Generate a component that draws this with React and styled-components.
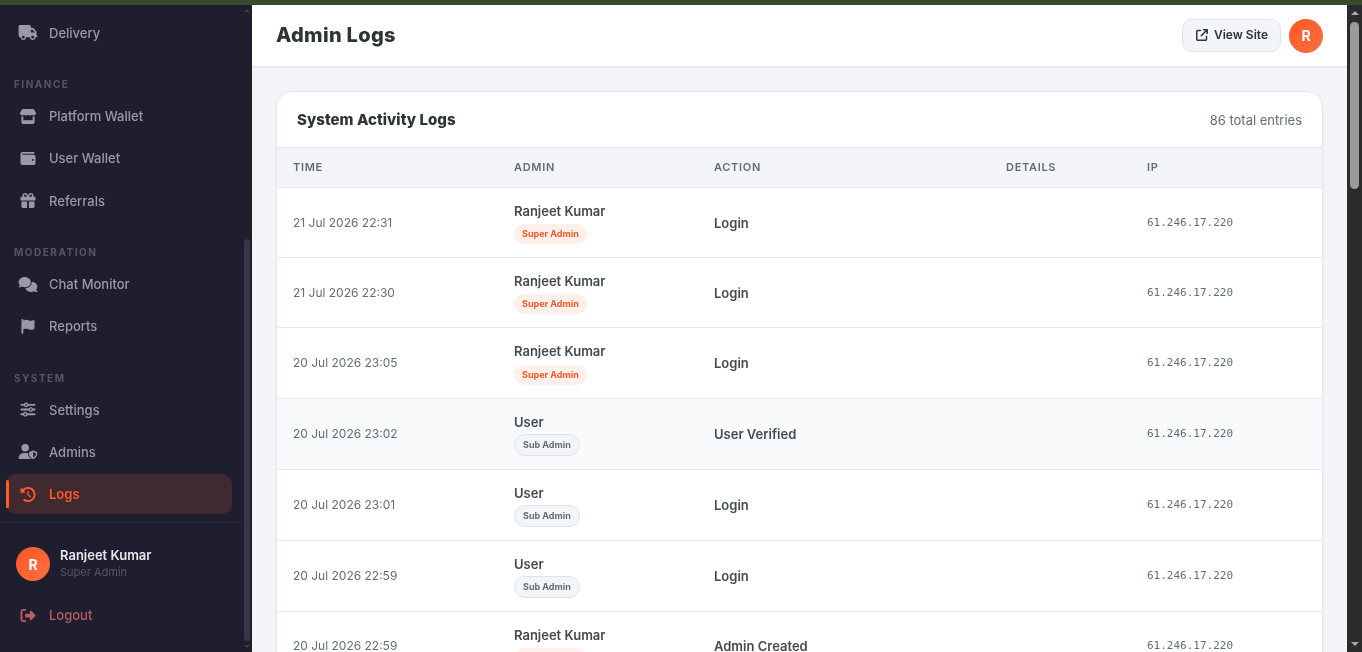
import React from 'react';
import styled, { createGlobalStyle } from 'styled-components';
import {
  FaTruck,
  FaStore,
  FaWallet,
  FaGift,
  FaComments,
  FaFlag,
  FaSliders,
  FaUserShield,
  FaClockRotateLeft,
  FaRightFromBracket,
  FaArrowUpRightFromSquare,
} from 'react-icons/fa6';

const GlobalStyle = createGlobalStyle`
  html, body {
    margin: 0;
    height: 100%;
    overflow: hidden;
  }
  body {
    font-family: 'Inter', 'Liberation Sans', sans-serif;
    background: #f4f5f9;
  }
  * {
    box-sizing: border-box;
  }
`;

const Shell = styled.div`
  display: flex;
  flex-direction: column;
  height: 100vh;
  will-change: transform;
`;

const TopStrip = styled.div`
  flex: none;
  height: 5px;
  background: #3a4a2e;
`;

const Body = styled.div`
  flex: 1;
  min-height: 0;
  display: flex;
`;

const Sidebar = styled.aside`
  flex: none;
  display: flex;
  width: 252px;
  background: #1e1e2e;
`;

const SidebarInner = styled.div`
  flex: 1;
  min-width: 0;
  padding-top: 7.9px;
  overflow: hidden;
`;

// scrollbars, drawn because the page itself does not scroll
const ScrollTrack = styled.div`
  flex: none;
  display: flex;
  flex-direction: column;
  align-items: center;
  width: ${(p) => p.$width}px;
  padding-right: ${(p) => p.$right || 0}px;
  background: ${(p) => p.$bg};
`;

const ScrollArrow = styled.div`
  flex: none;
  width: 0;
  height: 0;
  margin: ${(p) => p.$margin};
  border-left: ${(p) => p.$size}px solid transparent;
  border-right: ${(p) => p.$size}px solid transparent;
  border-bottom: ${(p) => (p.$down ? 'none' : `${p.$size}px solid ${p.$color}`)};
  border-top: ${(p) => (p.$down ? `${p.$size}px solid ${p.$color}` : 'none')};
`;

const ScrollSlot = styled.div`
  flex: 1;
  min-height: 0;
  padding-top: ${(p) => p.$offset}px;
`;

const ScrollThumb = styled.div`
  width: ${(p) => p.$width}px;
  height: ${(p) => p.$height}px;
  border-radius: ${(p) => p.$width / 2}px;
  background: ${(p) => p.$color};
`;

const Section = styled.div`
  margin-top: 25.4px;
`;

const SectionLabel = styled.div`
  height: 12px;
  margin-bottom: 6px;
  padding-left: 14px;
  font-size: 10px;
  line-height: 12px;
  font-weight: 700;
  letter-spacing: 1.5px;
  color: #565664;
`;

const NavItem = styled.div`
  position: relative;
  display: flex;
  align-items: center;
  gap: 11px;
  height: 40px;
  margin: 0 11px 2.2px 6px;
  padding-left: 12px;
  border-radius: 10px;
  font-size: 13px;
  font-weight: ${(p) => (p.$active ? 600 : 500)};
  color: ${(p) => (p.$active ? '#ff5b2b' : '#9a9aa6')};
  background: ${(p) => (p.$active ? '#40292f' : 'transparent')};

  &::before {
    content: '';
    display: ${(p) => (p.$active ? 'block' : 'none')};
    position: absolute;
    left: 0;
    top: 6px;
    bottom: 6px;
    width: 3px;
    border-radius: 2px;
    background: #ff5b2b;
  }
`;

const NavIcon = styled.span`
  flex: none;
  display: flex;
  align-items: center;
  justify-content: center;
  width: 20px;

  svg {
    width: 20px;
    height: 15px;
  }
`;

const Footer = styled.div`
  margin-top: 8px;
  border-top: 1px solid #2b2b3c;
  padding: 24px 0 0;
`;

const UserRow = styled.div`
  display: flex;
  align-items: center;
  gap: 10px;
  padding-left: 16px;
`;

const UserText = styled.div`
  margin-top: -2px;
`;

const Avatar = styled.div`
  flex: none;
  display: flex;
  align-items: center;
  justify-content: center;
  width: 34px;
  height: 34px;
  border-radius: 50%;
  background: linear-gradient(135deg, #ff5722, #ff7043);
  color: #fff;
  font-size: 14px;
  font-weight: 700;
`;

const UserName = styled.div`
  font-size: 13px;
  line-height: 16px;
  font-weight: 600;
  color: #e6e6ec;
`;

const UserRole = styled.div`
  font-size: 11px;
  line-height: 14px;
  margin-top: 2px;
  color: #565664;
`;

const LogoutItem = styled(NavItem)`
  margin-top: 14px;
  color: #b85c68;
`;

const MainWrap = styled.div`
  flex: 1;
  min-width: 0;
  display: flex;
`;

const Main = styled.main`
  flex: 1;
  min-width: 0;
  overflow: hidden;
`;

const Topbar = styled.header`
  display: flex;
  align-items: center;
  justify-content: space-between;
  height: 62px;
  padding: 0 24px;
  background: #fff;
  border-bottom: 1px solid #e4e6ea;
  box-shadow: 0 1px 3px rgba(0, 0, 0, 0.04);
`;

const PageTitle = styled.h1`
  margin: 0 0 2px;
  font-size: 20px;
  font-weight: 800;
  letter-spacing: 0.3px;
  color: #2d3436;
`;

const TopActions = styled.div`
  display: flex;
  align-items: center;
  gap: 8px;
`;

const ViewSite = styled.button`
  display: flex;
  align-items: center;
  gap: 6px;
  height: 33px;
  padding: 0 12px 2px 13px;
  border: 1px solid #e0e2e6;
  border-radius: 10px;
  background: #f4f5f9;
  font-family: inherit;
  font-size: 12px;
  font-weight: 600;
  color: #2d3436;
`;

const Content = styled.div`
  padding: 24px;
`;

const Card = styled.section`
  background: #fff;
  border: 1px solid #e4e6ea;
  border-radius: 16px;
  overflow: hidden;
  box-shadow: 0 1px 4px rgba(0, 0, 0, 0.03);
`;

const CardHead = styled.div`
  display: flex;
  align-items: center;
  justify-content: space-between;
  height: 55px;
  padding: 0 20px;
`;

const CardTitle = styled.h2`
  margin: 0;
  font-size: 15px;
  font-weight: 800;
  letter-spacing: 0.05px;
  color: #2d3436;
`;

const Count = styled.span`
  font-size: 13px;
  color: #636e72;
`;

const Table = styled.table`
  width: 100%;
  border-collapse: collapse;
  table-layout: fixed;
`;

const Th = styled.th`
  width: ${(p) => p.$width || 'auto'};
  height: 40px;
  padding: 0 16px 2px;
  text-align: left;
  background: #f4f5f9;
  border-top: 1px solid #e4e6ea;
  border-bottom: 1px solid #e4e6ea;
  font-size: 11px;
  font-weight: 600;
  letter-spacing: 0.7px;
  color: #636e72;
`;

const Row = styled.tr`
  background: ${(p) => (p.$hover ? '#f9fafc' : '#fff')};
`;

const Td = styled.td`
  padding: ${(p) => 12 + (p.$shift || 0)}px 16px ${(p) => 15 - (p.$shift || 0)}px;
  border-bottom: 1px solid #e8e9ed;
  vertical-align: middle;
  font-size: 13px;
  line-height: 16px;
`;

const TimeText = styled.span`
  font-size: 12px;
  color: #636e72;
`;

const AdminName = styled.div`
  height: 17px;
  margin: 3px 0 3px;
  font-size: 13px;
  line-height: 17px;
  font-weight: 600;
  color: #444b50;
`;

const BadgeLine = styled.div`
  display: flex;
  align-items: flex-end;
  height: ${(p) => (p.$super ? '21.2px' : '22px')};
  margin-bottom: -2px;
`;

const Badge = styled.span`
  display: inline-flex;
  align-items: center;
  height: ${(p) => (p.$super ? '20px' : '22px')};
  padding: 0 8px;
  border-radius: 11px;
  font-size: 9px;
  font-weight: 700;
  color: ${(p) => (p.$super ? '#ff5722' : '#636e72')};
  background: ${(p) => (p.$super ? '#fff0eb' : '#f4f5f9')};
  border: ${(p) => (p.$super ? 'none' : '1px solid #e0e2e6')};
`;

const ActionText = styled.span`
  font-size: 13px;
  font-weight: 600;
  color: #444b50;
`;

const IpText = styled.span`
  font-family: 'DejaVu Sans Mono', 'Liberation Mono', monospace;
  font-size: 11px;
  color: #636e72;
`;

const navSections = [
  {
    title: 'FINANCE',
    items: [
      { label: 'Platform Wallet', icon: FaStore },
      { label: 'User Wallet', icon: FaWallet },
      { label: 'Referrals', icon: FaGift },
    ],
  },
  {
    title: 'MODERATION',
    items: [
      { label: 'Chat Monitor', icon: FaComments },
      { label: 'Reports', icon: FaFlag },
    ],
  },
  {
    title: 'SYSTEM',
    items: [
      { label: 'Settings', icon: FaSliders },
      { label: 'Admins', icon: FaUserShield },
      { label: 'Logs', icon: FaClockRotateLeft, active: true },
    ],
  },
];

const IP = '61.246.17.220';
const RANJEET = { name: 'Ranjeet Kumar', isSuper: true };
const USER = { name: 'User', isSuper: false };

const logs = [
  { time: '21 Jul 2026 22:31', ...RANJEET, action: 'Login' },
  { time: '21 Jul 2026 22:30', ...RANJEET, action: 'Login' },
  { time: '20 Jul 2026 23:05', ...RANJEET, action: 'Login' },
  { time: '20 Jul 2026 23:02', ...USER, action: 'User Verified', hover: true },
  { time: '20 Jul 2026 23:01', ...USER, action: 'Login' },
  { time: '20 Jul 2026 22:59', ...USER, action: 'Login' },
  { time: '20 Jul 2026 22:59', ...RANJEET, action: 'Admin Created' },
];

const NavLink = ({ item }) => {
  const Icon = item.icon;
  return (
    <NavItem $active={item.active}>
      <NavIcon>
        <Icon />
      </NavIcon>
      {item.label}
    </NavItem>
  );
};

const App = () => {
  return (
    <Shell>
      <GlobalStyle />
      <TopStrip />
      <Body>
        <Sidebar>
          <SidebarInner>
            <NavLink item={{ label: 'Delivery', icon: FaTruck }} />
            {navSections.map((section) => (
              <Section key={section.title}>
                <SectionLabel>{section.title}</SectionLabel>
                {section.items.map((item) => (
                  <NavLink key={item.label} item={item} />
                ))}
              </Section>
            ))}
            <Footer>
              <UserRow>
                <Avatar>R</Avatar>
                <UserText>
                  <UserName>Ranjeet Kumar</UserName>
                  <UserRole>Super Admin</UserRole>
                </UserText>
              </UserRow>
              <LogoutItem>
                <NavIcon>
                  <FaRightFromBracket />
                </NavIcon>
                Logout
              </LogoutItem>
            </Footer>
          </SidebarInner>
          <ScrollTrack $width={9} $right={1} $bg="#1e1e2e">
            <ScrollArrow $size={3} $color="#3f3f50" $margin="4px 0 0" />
            <ScrollSlot $offset={227}>
              <ScrollThumb $width={6} $height={402} $color="#36364a" />
            </ScrollSlot>
            <ScrollArrow $down $size={3} $color="#3f3f50" $margin="0 0 4px" />
          </ScrollTrack>
        </Sidebar>
        <MainWrap>
          <Main>
            <Topbar>
              <PageTitle>Admin Logs</PageTitle>
              <TopActions>
                <ViewSite>
                  <FaArrowUpRightFromSquare size={12} />
                  View Site
                </ViewSite>
                <Avatar>R</Avatar>
              </TopActions>
            </Topbar>
            <Content>
              <Card>
                <CardHead>
                  <CardTitle>System Activity Logs</CardTitle>
                  <Count>86 total entries</Count>
                </CardHead>
                <Table>
                  <thead>
                    <tr>
                      <Th $width="221px">TIME</Th>
                      <Th $width="200px">ADMIN</Th>
                      <Th $width="292px">ACTION</Th>
                      <Th $width="141px">DETAILS</Th>
                      <Th>IP</Th>
                    </tr>
                  </thead>
                  <tbody>
                    {logs.map((log, i) => (
                      <Row key={i} $hover={log.hover}>
                        <Td $shift={0.95}>
                          <TimeText>{log.time}</TimeText>
                        </Td>
                        <Td>
                          <AdminName>{log.name}</AdminName>
                          <BadgeLine $super={log.isSuper}>
                            <Badge $super={log.isSuper}>
                              {log.isSuper ? 'Super Admin' : 'Sub Admin'}
                            </Badge>
                          </BadgeLine>
                        </Td>
                        <Td $shift={1.7}>
                          <ActionText>{log.action}</ActionText>
                        </Td>
                        <Td />
                        <Td $shift={0.5}>
                          <IpText>{IP}</IpText>
                        </Td>
                      </Row>
                    ))}
                  </tbody>
                </Table>
              </Card>
            </Content>
          </Main>
          <ScrollTrack $width={15} $bg="#2b2b2b">
            <ScrollArrow $size={4.5} $color="#a8a8a8" $margin="6px 0 0" />
            <ScrollSlot $offset={7}>
              <ScrollThumb $width={9} $height={167} $color="#9b9b9b" />
            </ScrollSlot>
            <ScrollArrow $down $size={4.5} $color="#a8a8a8" $margin="0 0 6px" />
          </ScrollTrack>
        </MainWrap>
      </Body>
    </Shell>
  );
};

export default App;
